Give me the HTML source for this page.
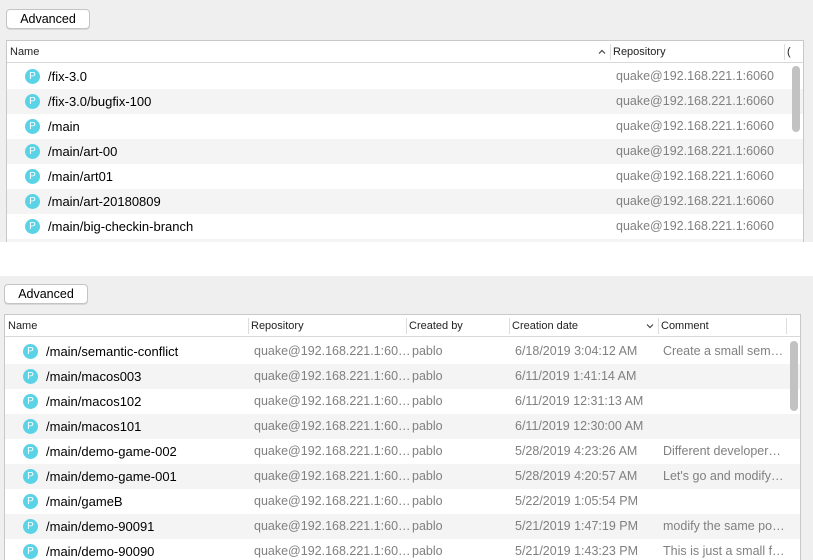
<!DOCTYPE html>
<html><head><style>
*{margin:0;padding:0;box-sizing:border-box}
body{width:813px;height:560px;overflow:hidden;background:#fff;font-family:"Liberation Sans",Helvetica,Arial,sans-serif;font-size:12.5px;color:#000;position:relative}
.panel{position:absolute;left:0;width:813px;background:#efefef;overflow:hidden}
.btn{position:absolute;height:20px;width:84px;background:#fff;border:1px solid #c4c4c4;border-radius:4px;font-size:12.5px;text-align:center;line-height:18px;box-shadow:0 1px 0 #d8d8d8}
.tbl{position:absolute;background:#fff;border:1px solid #c8c8c8;overflow:hidden}
.hdr{position:absolute;left:0;top:0;right:0;height:22px;border-bottom:1px solid #d8d8d8;background:#fff;font-size:11px;color:#222}
.hdr span{position:absolute;top:5px}
.sep{position:absolute;top:3px;width:1px;height:16px;background:#ddd}
.row{position:absolute;left:0;right:0;height:25px;line-height:25px;white-space:nowrap}
.row.g{background:#f4f4f4}
.row span{position:absolute;top:0}
.row span.b{font-size:13px}
.ic{position:absolute;top:5px;width:15px;height:15px;border-radius:50%;background:#5bd3e6;color:#fff;font-size:10px;line-height:15px;text-align:center}
.gr{color:#808080}
.sb{position:absolute;width:8px;border-radius:4px;background:#c2c2c2}
</style></head><body>

<div class="panel" style="top:0;height:242px">
<div class="btn" style="left:6px;top:9px">Advanced</div>
<div class="tbl" style="left:6px;top:40px;width:798px;height:215px">
 <div class="hdr">
  <span style="left:3px">Name</span>
  <svg style="position:absolute;left:591px;top:8px" width="8" height="5"><path d="M1 4.5L4 1.5L7 4.5" fill="none" stroke="#444" stroke-width="1.2"/></svg>
  <div class="sep" style="left:603px"></div>
  <span style="left:606px">Repository</span>
  <div class="sep" style="left:777px"></div>
  <span style="left:780px">(</span>
 </div>
 <div style="position:absolute;left:0;right:0;top:23px">
  <div class="row" style="top:0"><div class="ic" style="left:18px">P</div><span class="b" style="left:41px">/fix-3.0</span><span class="gr" style="left:609px">quake@192.168.221.1:6060</span></div>
  <div class="row g" style="top:25px"><div class="ic" style="left:18px">P</div><span class="b" style="left:41px">/fix-3.0/bugfix-100</span><span class="gr" style="left:609px">quake@192.168.221.1:6060</span></div>
  <div class="row" style="top:50px"><div class="ic" style="left:18px">P</div><span class="b" style="left:41px">/main</span><span class="gr" style="left:609px">quake@192.168.221.1:6060</span></div>
  <div class="row g" style="top:75px"><div class="ic" style="left:18px">P</div><span class="b" style="left:41px">/main/art-00</span><span class="gr" style="left:609px">quake@192.168.221.1:6060</span></div>
  <div class="row" style="top:100px"><div class="ic" style="left:18px">P</div><span class="b" style="left:41px">/main/art01</span><span class="gr" style="left:609px">quake@192.168.221.1:6060</span></div>
  <div class="row g" style="top:125px"><div class="ic" style="left:18px">P</div><span class="b" style="left:41px">/main/art-20180809</span><span class="gr" style="left:609px">quake@192.168.221.1:6060</span></div>
  <div class="row" style="top:150px"><div class="ic" style="left:18px">P</div><span class="b" style="left:41px">/main/big-checkin-branch</span><span class="gr" style="left:609px">quake@192.168.221.1:6060</span></div>
  <div class="row g" style="top:175px"><div class="ic" style="left:18px">P</div></div>
 </div>
 <div class="sb" style="left:785px;top:25px;height:66px"></div>
</div>
</div>

<div class="panel" style="top:276px;height:284px">
<div class="btn" style="left:4px;top:8px">Advanced</div>
<div class="tbl" style="left:4px;top:38px;width:797px;height:260px">
 <div class="hdr">
  <span style="left:3px">Name</span>
  <div class="sep" style="left:243px"></div>
  <span style="left:246px">Repository</span>
  <div class="sep" style="left:401px"></div>
  <span style="left:404px">Created by</span>
  <div class="sep" style="left:504px"></div>
  <span style="left:507px">Creation date</span>
  <svg style="position:absolute;left:641px;top:9px" width="8" height="5"><path d="M1 0.5L4 3.5L7 0.5" fill="none" stroke="#444" stroke-width="1.2"/></svg>
  <div class="sep" style="left:653px"></div>
  <span style="left:656px">Comment</span>
  <div class="sep" style="left:781px"></div>
 </div>
 <div style="position:absolute;left:0;right:0;top:24px">
  <div class="row" style="top:0"><div class="ic" style="left:18px">P</div><span class="b" style="left:41px">/main/semantic-conflict</span><span class="gr" style="left:249px">quake@192.168.221.1:60…</span><span class="gr" style="left:407px">pablo</span><span class="gr" style="left:510px">6/18/2019 3:04:12 AM</span><span class="gr" style="left:658px">Create a small sem…</span></div>
  <div class="row g" style="top:25px"><div class="ic" style="left:18px">P</div><span class="b" style="left:41px">/main/macos003</span><span class="gr" style="left:249px">quake@192.168.221.1:60…</span><span class="gr" style="left:407px">pablo</span><span class="gr" style="left:510px">6/11/2019 1:41:14 AM</span></div>
  <div class="row" style="top:50px"><div class="ic" style="left:18px">P</div><span class="b" style="left:41px">/main/macos102</span><span class="gr" style="left:249px">quake@192.168.221.1:60…</span><span class="gr" style="left:407px">pablo</span><span class="gr" style="left:510px">6/11/2019 12:31:13 AM</span></div>
  <div class="row g" style="top:75px"><div class="ic" style="left:18px">P</div><span class="b" style="left:41px">/main/macos101</span><span class="gr" style="left:249px">quake@192.168.221.1:60…</span><span class="gr" style="left:407px">pablo</span><span class="gr" style="left:510px">6/11/2019 12:30:00 AM</span></div>
  <div class="row" style="top:100px"><div class="ic" style="left:18px">P</div><span class="b" style="left:41px">/main/demo-game-002</span><span class="gr" style="left:249px">quake@192.168.221.1:60…</span><span class="gr" style="left:407px">pablo</span><span class="gr" style="left:510px">5/28/2019 4:23:26 AM</span><span class="gr" style="left:658px">Different developer…</span></div>
  <div class="row g" style="top:125px"><div class="ic" style="left:18px">P</div><span class="b" style="left:41px">/main/demo-game-001</span><span class="gr" style="left:249px">quake@192.168.221.1:60…</span><span class="gr" style="left:407px">pablo</span><span class="gr" style="left:510px">5/28/2019 4:20:57 AM</span><span class="gr" style="left:658px">Let's go and modify…</span></div>
  <div class="row" style="top:150px"><div class="ic" style="left:18px">P</div><span class="b" style="left:41px">/main/gameB</span><span class="gr" style="left:249px">quake@192.168.221.1:60…</span><span class="gr" style="left:407px">pablo</span><span class="gr" style="left:510px">5/22/2019 1:05:54 PM</span></div>
  <div class="row g" style="top:175px"><div class="ic" style="left:18px">P</div><span class="b" style="left:41px">/main/demo-90091</span><span class="gr" style="left:249px">quake@192.168.221.1:60…</span><span class="gr" style="left:407px">pablo</span><span class="gr" style="left:510px">5/21/2019 1:47:19 PM</span><span class="gr" style="left:658px">modify the same po…</span></div>
  <div class="row" style="top:200px"><div class="ic" style="left:18px">P</div><span class="b" style="left:41px">/main/demo-90090</span><span class="gr" style="left:249px">quake@192.168.221.1:60…</span><span class="gr" style="left:407px">pablo</span><span class="gr" style="left:510px">5/21/2019 1:43:23 PM</span><span class="gr" style="left:658px">This is just a small f…</span></div>
 </div>
 <div class="sb" style="left:785px;top:26px;height:70px"></div>
</div>
</div>
</body></html>
